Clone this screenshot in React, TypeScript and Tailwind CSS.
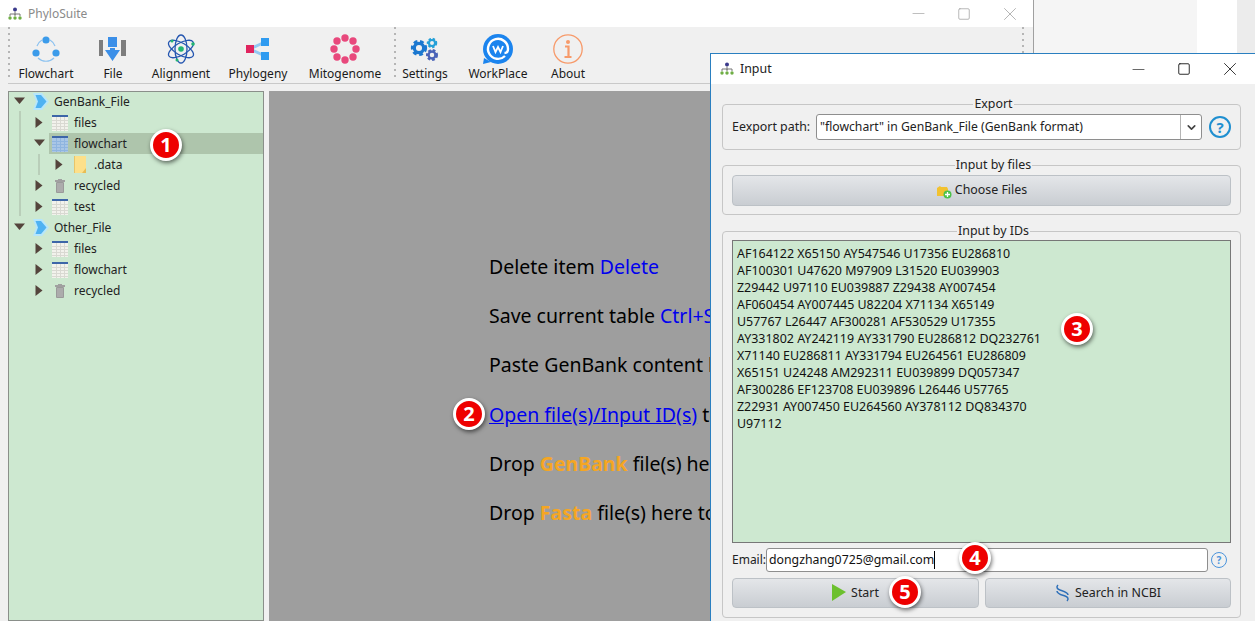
import React from 'react';
import { X, Minus, Square, ChevronDown } from 'lucide-react';

const FONT = "font-['Noto_Sans','Open_Sans',sans-serif]";

const ID_LINES = [
  'AF164122 X65150 AY547546 U17356 EU286810',
  'AF100301 U47620 M97909 L31520 EU039903',
  'Z29442 U97110 EU039887 Z29438 AY007454',
  'AF060454 AY007445 U82204 X71134 X65149',
  'U57767 L26447 AF300281 AF530529 U17355',
  'AY331802 AY242119 AY331790 EU286812 DQ232761',
  'X71140 EU286811 AY331794 EU264561 EU286809',
  'X65151 U24248 AM292311 EU039899 DQ057347',
  'AF300286 EF123708 EU039896 L26446 U57765',
  'Z22931 AY007450 EU264560 AY378112 DQ834370',
  'U97112',
];

function AppLogo() {
  return (
    <svg width="14" height="14" viewBox="0 0 14 14" fill="none">
      <circle cx="7" cy="2.5" r="2" fill="#3b3a8c" />
      <path d="M7 4.5V8M2 9V7h10v2" stroke="#777" strokeWidth="1" />
      <path d="M7 7v2" stroke="#777" strokeWidth="1" />
      <circle cx="2" cy="11" r="1.7" fill="#6fae45" />
      <circle cx="7" cy="11" r="1.7" fill="#6fae45" />
      <circle cx="12" cy="11" r="1.7" fill="#6fae45" />
    </svg>
  );
}

function FlowchartIcon() {
  return (
    <svg width="30" height="30" viewBox="0 0 30 30" fill="none">
      <path d="M6 12A11.500 11.500 0 0 1 11 6M19 6A11.500 11.500 0 0 1 24 12M7 24A11.500 11.500 0 0 0 23 24" stroke="#8cc2f0" strokeWidth="1.200" />
      <circle cx="15" cy="6" r="3.600" fill="#3b9bea" />
      <circle cx="5" cy="19" r="3.600" fill="#3b9bea" />
      <circle cx="25" cy="19" r="3.600" fill="#3b9bea" />
    </svg>
  );
}

function FileIcon() {
  return (
    <svg width="30" height="30" viewBox="0 0 30 30">
      <rect x="1" y="6" width="4" height="16" fill="#7d7d7d" />
      <rect x="23" y="6" width="5" height="16" fill="#7d7d7d" />
      <rect x="10" y="3" width="9" height="10" fill="#3b8fe8" />
      <path d="M7 16h5v-2h5v2h5l-7.500 11z" fill="#3b8fe8" />
    </svg>
  );
}

function AtomIcon() {
  return (
    <svg width="30" height="30" viewBox="0 0 30 30" fill="none" stroke="#2456b0" strokeWidth="1.300">
      <ellipse cx="15" cy="15" rx="14" ry="6" transform="rotate(30 15 15)" />
      <ellipse cx="15" cy="15" rx="14" ry="6" transform="rotate(-30 15 15)" />
      <ellipse cx="15" cy="15" rx="6" ry="14" />
      <circle cx="15" cy="15" r="2.800" fill="#22b573" stroke="none" />
      <circle cx="27" cy="10" r="1.800" fill="#22b573" stroke="none" />
      <circle cx="6" cy="7" r="1.500" fill="#22b573" stroke="none" />
      <circle cx="11" cy="26" r="1.500" fill="#22b573" stroke="none" />
    </svg>
  );
}

function PhylogenyIcon() {
  return (
    <svg width="30" height="30" viewBox="0 0 30 30">
      <path d="M7 15L22 8M7 15L22 22" stroke="#93c8f2" strokeWidth="3" />
      <rect x="3" y="11" width="8" height="8" fill="#e0245e" />
      <rect x="18" y="4" width="8" height="8" fill="#2f9bf0" />
      <rect x="18" y="18" width="8" height="8" fill="#2f9bf0" />
    </svg>
  );
}

function MitoIcon() {
  const dots = [
    [15, 4], [23, 7], [26, 15], [23, 23], [15, 26], [7, 23], [4, 15], [7, 7],
  ];
  return (
    <svg width="30" height="30" viewBox="0 0 30 30">
      {dots.map(([x, y]) => (
        <circle key={`${x}-${y}`} cx={x} cy={y} r="3.700" fill="#e8487c" />
      ))}
    </svg>
  );
}

function Gear({ x, y, r, color }: { x: number; y: number; r: number; color: string }) {
  return (
    <g>
      <circle cx={x} cy={y} r={r} fill="none" stroke={color} strokeWidth={r * 0.5} strokeDasharray={`${r * 0.55} ${r * 0.4}`} />
      <circle cx={x} cy={y} r={r * 0.72} fill="none" stroke={color} strokeWidth={r * 0.5} />
    </g>
  );
}

function SettingsIcon() {
  return (
    <svg width="30" height="30" viewBox="0 0 30 30">
      <Gear x={9} y={14} r={6.500} color="#1b78d0" />
      <Gear x={22} y={9} r={4.200} color="#25a0d8" />
      <Gear x={22} y={21} r={4.800} color="#4a63b8" />
    </svg>
  );
}

function WorkPlaceIcon() {
  return (
    <svg width="30" height="31" viewBox="0 0 30 31">
      <circle cx="15" cy="15" r="15" fill="#1b84ee" />
      <path d="M1 24l-1 6 8-2z" fill="#1b84ee" />
      <path d="M22 22a10 10 0 1 1 3-7c0 3-2 4-3.500 4" fill="none" stroke="#fff" strokeWidth="2.400" />
      <path d="M10 12l2.500 6 2.500-5 2.500 5 2.500-6" fill="none" stroke="#fff" strokeWidth="1.800" />
    </svg>
  );
}

function AboutIcon() {
  return (
    <svg width="30" height="30" viewBox="0 0 30 30" fill="none">
      <circle cx="15" cy="15" r="14.200" stroke="#f79a6a" strokeWidth="1.300" />
      <circle cx="15" cy="8" r="2" fill="#f79a6a" />
      <path d="M12 12.500h3.500V22M11.500 23h7" stroke="#f79a6a" strokeWidth="2.200" />
    </svg>
  );
}

const TOOLS_LEFT = [
  { label: 'Flowchart', icon: <FlowchartIcon />, w: 'w-[64px]' },
  { label: 'File', icon: <FileIcon />, w: 'w-[70px]' },
  { label: 'Alignment', icon: <AtomIcon />, w: 'w-[66px]' },
  { label: 'Phylogeny', icon: <PhylogenyIcon />, w: 'w-[88px]' },
  { label: 'Mitogenome', icon: <MitoIcon />, w: 'w-[86px]' },
];

const TOOLS_RIGHT = [
  { label: 'Settings', icon: <SettingsIcon />, w: 'w-[54px]' },
  { label: 'WorkPlace', icon: <WorkPlaceIcon />, w: 'w-[92px]' },
  { label: 'About', icon: <AboutIcon />, w: 'w-[48px]' },
];

function ToolItem({ label, icon, w }: { label: string; icon: React.ReactNode; w: string }) {
  return (
    <div className={`${w} flex flex-col items-center shrink-0`}>
      <div className="h-[31px] pt-[7px] box-content flex items-start justify-center">{icon}</div>
      <span className="text-[12px] leading-[16px] mt-[1px] text-[#1a1a1a] whitespace-nowrap">{label}</span>
    </div>
  );
}

function Grip() {
  return (
    <div className="w-[2px] h-[54px] shrink-0 bg-[repeating-linear-gradient(to_bottom,#b5b5b5_0,#b5b5b5_2px,transparent_2px,transparent_6px)]" />
  );
}

function Arrow({ open }: { open?: boolean }) {
  return (
    <svg width="11" height="11" viewBox="0 0 11 11" className="shrink-0">
      <path d={open ? 'M0 1.500h11L5.500 8z' : 'M1.500 0L8.500 5.500 1.500 11z'} fill="#54443c" />
    </svg>
  );
}

function TableIcon({ active }: { active?: boolean }) {
  const cell = active ? '#8fb5e0' : '#d9d9d2';
  return (
    <svg width="16" height="16" viewBox="0 0 16 16" className="shrink-0">
      <rect x="0" y="0" width="16" height="16" fill={active ? '#a9c6e6' : '#f2f2ec'} />
      <rect x="0" y="0" width="16" height="2" fill="#3d66a8" />
      {[5, 8, 11, 14].map(y => (
        <rect key={y} x="0" y={y} width="16" height="1" fill={cell} />
      ))}
      {[4, 8, 12].map(x => (
        <rect key={x} x={x} y="2" width="1" height="14" fill={cell} />
      ))}
    </svg>
  );
}

function TrashIcon() {
  return (
    <svg width="16" height="16" viewBox="0 0 16 16" className="shrink-0">
      <path d="M6 1h4v1h3v2H3V2h3z" fill="#a0a0a0" />
      <rect x="4" y="4" width="8" height="11" rx="1" fill="#9a9a9a" />
      <path d="M6 5v9M8 5v9M10 5v9" stroke="#c8c8c8" strokeWidth="0.800" />
    </svg>
  );
}

function FolderIcon() {
  return (
    <svg width="14" height="17" viewBox="0 0 14 17" className="shrink-0">
      <path d="M1 0h12v17H1z" fill="#fde08a" />
      <path d="M9 17l4-5v5z" fill="#e8bd55" />
      <path d="M1 0h1v17H1z" fill="#e8c56a" />
    </svg>
  );
}

function RootIcon() {
  return (
    <svg width="17" height="17" viewBox="0 0 17 17" className="shrink-0 overflow-visible">
      <path d="M1 0h9l7 8.500-7 8.500H1l3-8.500z" fill="#b7e6fb" />
      <path d="M3.500 2H9l5.500 6.500L9 15H3.500L6 8.500z" fill="#4fb2f2" />
    </svg>
  );
}

function TreeRow({
  depth,
  open,
  icon,
  label,
  active,
}: {
  depth: 0 | 1 | 2;
  open?: boolean;
  icon: React.ReactNode;
  label: string;
  active?: boolean;
}) {
  const pad = depth === 0 ? 'pl-[5px]' : depth === 1 ? 'pl-[25px]' : 'pl-[45px]';
  return (
    <div className={`h-[21px] flex items-center ${pad} relative`}>
      {active && <div className="absolute left-[40px] right-0 top-0 bottom-0 bg-[#aec5ac]" />}
      <div className="relative flex items-center">
        <Arrow open={open} />
        <div className="w-[7px]" />
        <div className="w-[16px] flex justify-center">{icon}</div>
        <span className="text-[12px] text-[#222] ml-[6px] whitespace-nowrap">{label}</span>
      </div>
    </div>
  );
}

function Tree() {
  return (
    <div className="w-[256px] h-[530px] shrink-0 bg-[#cde8d0] border border-[#8a8f8a] relative">
      <div className="absolute left-[10px] top-[19px] h-[105px] w-[2px] bg-[#b9ceb9]" />
      <div className="absolute left-[29px] top-[62px] h-[21px] w-[2px] bg-[#b9ceb9]" />
      <div className="-mt-px">
        <TreeRow depth={0} open icon={<RootIcon />} label="GenBank_File" />
        <TreeRow depth={1} icon={<TableIcon />} label="files" />
        <TreeRow depth={1} open active icon={<TableIcon active />} label="flowchart" />
        <TreeRow depth={2} icon={<FolderIcon />} label=".data" />
        <TreeRow depth={1} icon={<TrashIcon />} label="recycled" />
        <TreeRow depth={1} icon={<TableIcon />} label="test" />
        <TreeRow depth={0} open icon={<RootIcon />} label="Other_File" />
        <TreeRow depth={1} icon={<TableIcon />} label="files" />
        <TreeRow depth={1} icon={<TableIcon />} label="flowchart" />
        <TreeRow depth={1} icon={<TrashIcon />} label="recycled" />
      </div>
    </div>
  );
}

function Hint({ children }: { children: React.ReactNode }) {
  return <p className="h-[49.200px] text-[19.500px] leading-[26px] text-black whitespace-nowrap">{children}</p>;
}

function Badge({ n, className }: { n: number; className: string }) {
  return (
    <div
      className={`absolute w-[32px] h-[32px] rounded-full bg-[#ee0000] border-[3px] border-white shadow-[1px_2px_4px_rgba(0,0,0,0.55)] flex items-center justify-center text-white font-bold text-[20px] leading-none ${className}`}
    >
      {n}
    </div>
  );
}

function GroupBox({
  title,
  className,
  children,
}: {
  title: string;
  className: string;
  children: React.ReactNode;
}) {
  return (
    <div className={`relative ml-[11px] mr-[14px] border border-[#c6c6c6] rounded-[4px] px-[9px] ${className}`}>
      {/* titles sit a little right of the box centre in the real dialog */}
      <div className="absolute left-[24px] right-0 -top-[9px] flex justify-center">
        <span className="bg-[#f0f0f0] px-[1px] text-[12.400px] leading-[16px] text-[#222]">{title}</span>
      </div>
      {children}
    </div>
  );
}

function GradButton({ className, children }: { className: string; children: React.ReactNode }) {
  return (
    <div
      className={`flex items-center justify-center rounded-[4px] border border-[#bcc1c6] bg-gradient-to-b from-[#e4e6e9] to-[#c9cdd2] text-[12.400px] text-[#222] ${className}`}
    >
      {children}
    </div>
  );
}

function HelpIcon({ size }: { size: number }) {
  return (
    <div
      className={`rounded-full flex items-center justify-center font-bold ${
        size > 20
          ? 'w-[22px] h-[22px] border-[2px] border-[#1f8fd0] text-[15px] text-[#1f8fd0]'
          : 'w-[16px] h-[16px] border border-[#4a94dc] text-[10px] text-[#4a94dc]'
      }`}
    >
      ?
    </div>
  );
}

function InputDialog() {
  return (
    <div className="absolute left-[710px] top-[53px] w-[546px] h-[569px] border border-[#2a7fc0] bg-[#f0f0f0] text-[#222]">
      <div className="h-[30px] bg-white flex items-center pl-[9px]">
        <AppLogo />
        <span className="text-[12.400px] ml-[6px] text-[#222]">Input</span>
        <div className="ml-auto flex items-center">
          <div className="w-[46px] flex justify-center">
            <Minus size={19} strokeWidth={0.800} color="#111" />
          </div>
          <div className="w-[46px] flex justify-center">
            <Square size={14} strokeWidth={1.500} color="#111" />
          </div>
          <div className="w-[46px] flex justify-center mr-[2px]">
            <X size={22} strokeWidth={0.900} color="#111" />
          </div>
        </div>
      </div>

      <GroupBox title="Export" className="mt-[20px] h-[46px] flex items-center">
        <span className="text-[12.400px] w-[84px] whitespace-nowrap">Eexport path:</span>
        <div className="w-[386px] h-[26px] bg-white border border-[#8e8e8e] rounded-[3px] flex items-center pl-[3px]">
          <span className="text-[12.200px] flex-1 whitespace-nowrap">"flowchart" in GenBank_File (GenBank format)</span>
          <div className="w-[21px] h-full border-l border-[#b5b5b5] flex items-center justify-center">
            <ChevronDown size={13} strokeWidth={3} color="#444" />
          </div>
        </div>
        <div className="ml-[7px]">
          <HelpIcon size={22} />
        </div>
      </GroupBox>

      <GroupBox title="Input by files" className="mt-[15px] h-[50px] pt-[9px]">
        <GradButton className="h-[31px] gap-[3px]">
          <svg width="16" height="16" viewBox="0 0 16 16">
            <path d="M1 5l3-2 1 1h6l1 2v7H1z" fill="#f2c230" />
            <circle cx="11.500" cy="11.500" r="4" fill="#4cc24a" />
            <path d="M11.500 9v5M9 11.500h5" stroke="#fff" strokeWidth="1.300" />
          </svg>
          <span>Choose Files</span>
        </GradButton>
      </GroupBox>

      <GroupBox title="Input by IDs" className="mt-[16px] h-[387px] pt-[8px]">
        <div className="h-[303px] bg-[#cde8d0] border border-[#777] pl-[4px] pt-[4px] text-[12.450px] leading-[17px] text-[#111]">
          {ID_LINES.map(line => (
            <div key={line} className="whitespace-nowrap">
              {line}
            </div>
          ))}
        </div>
        <div className="flex items-center h-[24px] mt-[5px]">
          <span className="text-[12px] w-[34px] whitespace-nowrap">Email:</span>
          <div className="w-[442px] h-[24px] bg-white border border-[#8e8e8e] rounded-[3px] pl-[2px] flex items-center">
            <span className="text-[12.300px] text-[#111] border-r border-black leading-[18px]">dongzhang0725@gmail.com</span>
          </div>
          <div className="ml-[3px]">
            <HelpIcon size={16} />
          </div>
        </div>
        <div className="flex gap-[6px] mt-[6px]">
          <GradButton className="w-[247px] h-[30px] gap-[5px]">
            <svg width="14" height="18" viewBox="0 0 14 18">
              <path d="M0 0l14 8-14 9z" fill="#6cc02e" />
            </svg>
            <span>Start</span>
          </GradButton>
          <GradButton className="w-[246px] h-[30px] gap-[5px]">
            <svg width="15" height="18" viewBox="0 0 15 18" fill="none" stroke="#2e6fb8" strokeWidth="1.500">
              <path d="M3 1c-2 2-1 4 2 5s8 2 8 5" />
              <path d="M12 17c2-2 1-4-2-5S2 10 2 7" />
            </svg>
            <span>Search in NCBI</span>
          </GradButton>
        </div>
      </GroupBox>
    </div>
  );
}

export default function App() {
  return (
    <div className={`relative w-[1255px] h-[621px] overflow-hidden flex bg-white ${FONT}`}>
      <div className="w-[1034px] h-[621px] shrink-0 flex flex-col bg-[#f0f0f0] border-r border-[#a0a0a0]">
        <div className="h-[27px] shrink-0 bg-white flex items-center pl-[8px]">
          <AppLogo />
          <span className="text-[12px] ml-[6px] text-[#8a8a8a]">PhyloSuite</span>
          <div className="ml-auto flex items-center">
            <div className="w-[46px] flex justify-center">
              <Minus size={19} strokeWidth={0.800} color="#999" />
            </div>
            <div className="w-[46px] flex justify-center">
              <Square size={14} strokeWidth={1.200} color="#999" />
            </div>
            <div className="w-[46px] flex justify-center">
              <X size={22} strokeWidth={0.800} color="#999" />
            </div>
          </div>
        </div>

        <div className="h-[57px] shrink-0 mx-[8px] border-b border-[#c9c9c9] flex items-start">
          <Grip />
          <div className="w-[4px]" />
          {TOOLS_LEFT.map(t => (
            <ToolItem key={t.label} {...t} />
          ))}
          <div className="w-[6px]" />
          <Grip />
          <div className="w-[2px]" />
          {TOOLS_RIGHT.map(t => (
            <ToolItem key={t.label} {...t} />
          ))}
          <div className="ml-auto mr-[1px]">
            <Grip />
          </div>
        </div>

        <div className="flex gap-[5px] pl-[8px] pt-[7px]">
          <Tree />
          <div className="w-[764px] h-[530px] bg-[#9e9e9e] pl-[220px] pt-[163px]">
            <Hint>
              Delete item <span className="text-[#0000ee]">Delete</span>
            </Hint>
            <Hint>
              Save current table <span className="text-[#0000ee]">Ctrl+S</span>
            </Hint>
            <Hint>Paste GenBank content here</Hint>
            <Hint>
              <span className="text-[#0000ee] underline">Open file(s)/Input ID(s)</span> to
            </Hint>
            <Hint>
              Drop <span className="text-[#f5a623] font-bold">GenBank</span> file(s) here
            </Hint>
            <Hint>
              Drop <span className="text-[#f5a623] font-bold">Fasta</span> file(s) here to
            </Hint>
          </div>
        </div>
      </div>

      <div className="w-[163px] bg-[#f5f5f5]" />
      <div className="w-[40px] bg-white" />
      <div className="flex-1 bg-[#ececec]" />

      <InputDialog />

      <Badge n={1} className="left-[150px] top-[129px]" />
      <Badge n={2} className="left-[453px] top-[398px]" />
      <Badge n={3} className="left-[1061px] top-[313px]" />
      <Badge n={4} className="left-[959px] top-[542px]" />
      <Badge n={5} className="left-[889px] top-[576px]" />
    </div>
  );
}
